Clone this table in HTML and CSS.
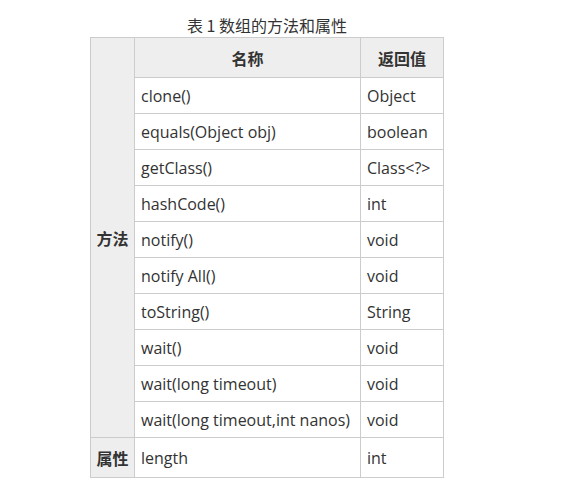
FILE: index.html
```html
<!DOCTYPE html>
<html lang="zh">
<head>
<meta charset="utf-8">
<link rel="stylesheet" href="styles.css">
</head>
<body>
<div class="wrap">
<table class="tbl">
<caption class="cap">表 1 数组的方法和属性</caption>
<colgroup><col class="c1"><col class="c2"><col class="c3"></colgroup>
<tbody>
<tr class="head"><th class="side" rowspan="11">方法</th><th>名称</th><th>返回值</th></tr>
<tr class="row"><td>clone()</td><td>Object</td></tr>
<tr class="row"><td>equals(Object obj)</td><td>boolean</td></tr>
<tr class="row"><td>getClass()</td><td>Class&lt;?&gt;</td></tr>
<tr class="row"><td>hashCode()</td><td>int</td></tr>
<tr class="row"><td>notify()</td><td>void</td></tr>
<tr class="row"><td>notify All()</td><td>void</td></tr>
<tr class="row"><td>toString()</td><td>String</td></tr>
<tr class="row"><td>wait()</td><td>void</td></tr>
<tr class="row"><td>wait(long timeout)</td><td>void</td></tr>
<tr class="row"><td>wait(long timeout,int nanos)</td><td>void</td></tr>
<tr class="last"><th class="side">属性</th><td>length</td><td>int</td></tr>
</tbody>
</table>
</div>
</body>
</html>
```
FILE: styles.css
```css
html, body { margin: 0; padding: 0; background: #fff; }
body {
  font-family: "Open Sans", "Noto Sans CJK SC", sans-serif;
  color: #333;
  font-size: 16px;
}
.wrap { padding: 13px 0 0 90px; }
.tbl {
  border-collapse: collapse;
  table-layout: fixed;
  width: 353px;
}
.cap {
  font-family: "Noto Sans CJK SC", sans-serif;
  font-size: 16px;
  line-height: 24px;
  height: 24px;
  text-align: center;
}
.c1 { width: 44px; }
.c2 { width: 226px; }
.c3 { width: 83px; }
.tbl th, .tbl td {
  border: 1px solid #ccc;
  padding: 0 6px;
  text-align: left;
  font-weight: normal;
  white-space: nowrap;
}
.tbl th {
  background: #eee;
  font-weight: bold;
  font-family: "Noto Sans CJK SC", sans-serif;
  text-align: center;
}
.tbl .side { padding: 0; }
.head th { height: 39px; }
.row td { height: 35px; }
.last td, .last th { height: 39px; }
```
